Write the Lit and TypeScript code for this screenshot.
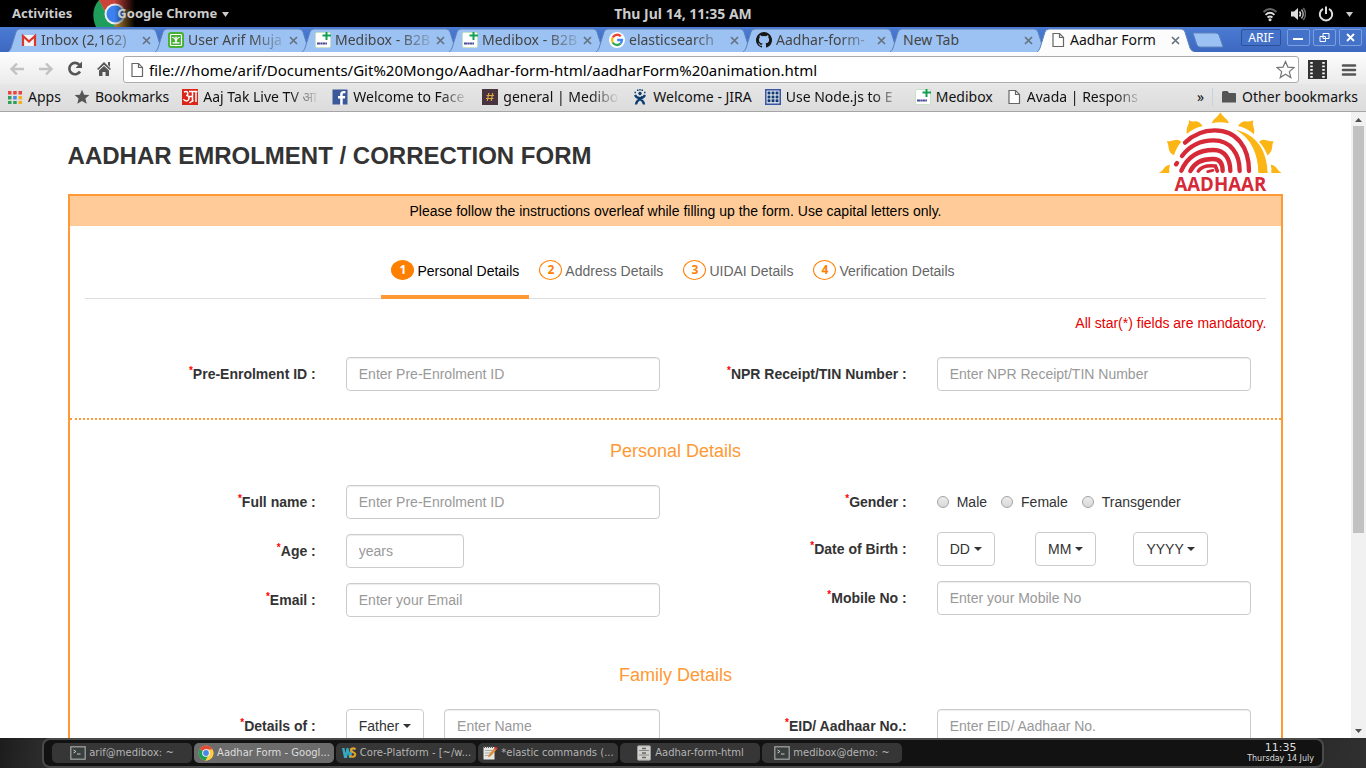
import { LitElement, html, svg, css, nothing, TemplateResult } from "lit";
import { customElement, property } from "lit/decorators.js";
import { classMap } from "lit/directives/class-map.js";

const page = svg`<path d="M3 1.5h6.5l4 4v9H3z" fill="#fff" stroke="#666" stroke-width="1.2"/><path d="M9.500 1.500v4h4" fill="none" stroke="#666" stroke-width="1.200"/>`;
const medibox = svg`<rect x=".5" y=".5" width="15" height="15" rx="1.500" fill="#fff" stroke="#c9e2c6"/><path d="M11.500 0v8M7.500 3.500H16" stroke="#12a150" stroke-width="2"/><path d="M2 11.500h10" stroke="#4b4b9b" stroke-width="2" stroke-dasharray="3 .3 2 .3"/>`;
const terminal = svg`<rect x=".8" y="1.800" width="14.400" height="12.400" fill="#39403f" stroke="#a6a6a6" stroke-width="1.200"/><path d="M3.500 5l2.500 1.500-2.500 1.500M7 9h3.500" stroke="#c8c8c8" fill="none"/>`;
const chrome = svg`<circle cx="8" cy="8" r="7.500" fill="#fc4"/><path d="M8 8L1.500 4.200A7.500 7.500 0 0 1 14.500 4.500z" fill="#e14b3d"/><path d="M8 8L1.500 4.200A7.500 7.500 0 0 0 7.500 15.500L11 9.500z" fill="#1d9f5b"/><path d="M8 4.500h6.500A7.500 7.500 0 0 1 7.500 15.500L11 9.500z" fill="#fc4"/><circle cx="8" cy="8" r="3.800" fill="#fff"/><circle cx="8" cy="8" r="2.900" fill="#4a86e8"/>`;

const ICONS: Record<string, TemplateResult> = {
  page,
  medibox,
  terminal,
  chrome,
  gmail: svg`<path d="M1 3h14v11H1z" fill="#f4f4f4"/><path d="M2 14V4l6 5.500L14 4v10" fill="none" stroke="#d8392c" stroke-width="2.200"/>`,
  user: svg`<rect width="16" height="16" rx="3" fill="#46b035"/><rect x="2.500" y="2.500" width="11" height="11" rx="1" fill="none" stroke="#fff" stroke-width="1.200"/><path d="M4.300 5.500c2 0 3.400 1.500 3.700 5 .3-3.500 1.700-5 3.700-5M8 4.500v5M4.500 10.800h7" fill="none" stroke="#fff" stroke-width="1.200"/>`,
  google: svg`<circle cx="8" cy="8" r="8" fill="#fff"/><g fill="none" stroke-width="2.300"><path d="M11.800 4.300A5 5 0 0 0 3.700 5.500" stroke="#ea4335"/><path d="M3.700 5.500a5 5 0 0 0 0 5" stroke="#fbbc05"/><path d="M3.700 10.500A5 5 0 0 0 11.400 11.700" stroke="#34a853"/><path d="M11.400 11.700A5 5 0 0 0 13 8H8.200" stroke="#4285f4"/></g>`,
  github: svg`<path fill="#191717" d="M8 0a8 8 0 0 0-2.530 15.590c.4.070.55-.17.550-.38v-1.490c-2.230.48-2.700-.94-2.700-.94-.36-.93-.89-1.170-.89-1.170-.73-.5.050-.49.050-.49.810.060 1.230.83 1.230.83.72 1.230 1.880.87 2.340.67.070-.52.280-.87.510-1.070-1.780-.2-3.640-.89-3.640-3.950 0-.87.310-1.590.82-2.150-.08-.2-.36-1.020.080-2.120 0 0 .67-.21 2.200.82a7.600 7.600 0 0 1 4 0c1.530-1.040 2.200-.82 2.200-.82.440 1.100.160 1.920.080 2.120.51.560.82 1.270.82 2.150 0 3.070-1.870 3.750-3.650 3.950.29.250.54.730.54 1.480v2.190c0 .21.150.46.550.38A8 8 0 0 0 8 0z"/>`,
  apps: svg`<g><path d="M1 2h3.500v3.500H1zM6.200 2h3.500v3.500H6.200zM11.500 2H15v3.500h-3.500z" fill="#e8453c"/><path d="M1 7h3.500v3.500H1z" fill="#2e9e5b"/><path d="M6.200 7h3.500v3.500H6.200z" fill="#4a86e8"/><path d="M11.500 7H15v3.500h-3.500z" fill="#f2b01e"/><path d="M1 12h3.500v3H1zM6.200 12h3.500v3H6.200z" fill="#2e9e5b"/><path d="M11.500 12H15v3h-3.500z" fill="#f2b01e"/></g>`,
  star: svg`<path d="M8 .8l2.100 4.900 5.300.4-4 3.500 1.300 5.200L8 12l-4.700 2.800 1.300-5.200-4-3.500 5.300-.4z" fill="#555"/>`,
  aajtak: svg`<rect width="16" height="16" fill="#dc2418"/><path d="M2 3c3-1.500 5 .5 3 3.500 3 .5 2.500 5-.5 5.500-1.500 0-2.500-.8-3-2M6 7.500h4M7 2.500h8.500M10.500 2.500V13M14 2.500V13M7.500 14l4-3" fill="none" stroke="#fff" stroke-width="1.500"/>`,
  facebook: svg`<rect x=".5" y=".5" width="15" height="15" fill="#3b5998"/><path d="M10.700 16V9.500h2.200l.4-2.500h-2.600V5.500c0-.8.3-1.200 1.300-1.200h1.400V2.100c-3-.5-5.200.2-5.200 3.100V7H6v2.500h2.200V16z" fill="#fff"/>`,
  slack: svg`<rect width="16" height="16" fill="#49333f"/><path d="M6.800 4L5.300 12M10.700 4L9.200 12M4.500 6.500h7.500M4 9.500h7.500" stroke="#d9a441" stroke-width="1.200"/>`,
  jira: svg`<g fill="none" stroke="#0b3d6f"><circle cx="8" cy="4.500" r="1.300" fill="#0b3d6f"/><path d="M3 6c1 2.500 3 3 5 3s4-.5 5-3" stroke-width="2.200"/><path d="M4 15.500c0-3 1.500-4 4-5.500s2-2 2.500-2.500M12 15.500c0-3-1.500-4-4-5.500" stroke-width="2.200"/><path d="M2.500 3.500h1.500M5 1.200h1.500M9.500 1.200H11M12 3.500h1.500M7.300.6h1.400" stroke-width="1.600"/></g>`,
  node: svg`<rect x=".8" y=".8" width="14.400" height="14.400" fill="#fff" stroke="#3b55a4" stroke-width="1.600"/><path d="M4 2.500v10.800M8 2.500v10.800M12 2.500v10.800" stroke="#123c70" stroke-width="3" stroke-dasharray="3 .9"/>`,
  folder: svg`<path d="M1 3.500q0-1.500 1.500-1.500h4L8 4h6q1 0 1 1v8.500H1z" fill="#555"/>`,
  webstorm: svg`<path d="M1 3l2 10h3l1-5 1 5h2l2-10H9.500L8.500 8 7.500 3H5.500L4.500 8 3.500 3z" fill="#35a9c4"/><path d="M14.500 4.500c-2-2-5-1-4.500 1 .4 2 4.500 1.500 4.300 4-.2 2.500-3.500 3-5.500 1" fill="none" stroke="#e0a12a" stroke-width="2.200"/>`,
  notes: svg`<path d="M1.500 2h11v12.500h-11z" fill="#e8e8e2"/><path d="M3 5.500h8M3 8h7M3 10.500h5" stroke="#999" stroke-width=".8"/><path d="M2 2h10" stroke="#555" stroke-width="1.800" stroke-dasharray="1 1"/><path d="M6 12.500l1-3 6-7 2 1.500-6 7z" fill="#dd8c3c"/><path d="M12.200 3.400l1.500-1.700 2 1.500-1.400 1.800z" fill="#d33"/>`,
  files: svg`<rect x="1.500" y=".8" width="13" height="14.400" rx="1" fill="#d2d2cc" stroke="#999"/><path d="M3 5.500h10M3 10h10" stroke="#888"/><path d="M6 3.500h4M6 8h4M6 12.500h4" stroke="#666" stroke-width="1.400"/>`,
};

const icon = (name: string) =>
  html`<svg class="icon" viewBox="0 0 16 16" aria-hidden="true">${ICONS[name]}</svg>`;

const TABS = [
  { icon: "gmail", title: "Inbox (2,162)" },
  { icon: "user", title: "User Arif Muja" },
  { icon: "medibox", title: "Medibox - B2B" },
  { icon: "medibox", title: "Medibox - B2B" },
  { icon: "google", title: "elasticsearch" },
  { icon: "github", title: "Aadhar-form-" },
  { icon: "", title: "New Tab" },
  { icon: "page", title: "Aadhar Form", active: true },
];

const BOOKMARKS = [
  { icon: "apps", title: "Apps" },
  { icon: "star", title: "Bookmarks" },
  { icon: "aajtak", title: "Aaj Tak Live TV आ", long: true },
  { icon: "facebook", title: "Welcome to Face", long: true },
  { icon: "slack", title: "general | Medibo", long: true },
  { icon: "jira", title: "Welcome - JIRA" },
  { icon: "node", title: "Use Node.js to E", long: true },
  { icon: "medibox", title: "Medibox" },
  { icon: "page", title: "Avada | Respons", long: true },
];

const WINDOWS = [
  { icon: "terminal", title: "arif@medibox: ~" },
  { icon: "chrome", title: "Aadhar Form - Googl...", active: true },
  { icon: "webstorm", title: "Core-Platform - [~/w..." },
  { icon: "notes", title: "*elastic commands (..." },
  { icon: "files", title: "Aadhar-form-html" },
  { icon: "terminal", title: "medibox@demo: ~" },
];

const iconStyles = css`
  * { box-sizing: border-box; }
  .icon { width: 16px; height: 16px; flex: none; display: block; }
  button { font: inherit; color: inherit; border: 0; padding: 0; background: none; }
`;

@customElement("shell-bar")
class ShellBar extends LitElement {
  static styles = [iconStyles, css`
    :host { display: grid; grid-template-columns: 1fr auto 1fr; align-items: center; height: 27px; background: #000; color: #ccc; font: bold 13px/27px "Noto Sans", "Open Sans", sans-serif; }
    .left { display: flex; height: 27px; padding-left: 12px; gap: 21px; }
    .app { display: grid; }
    .app button { grid-area: 1 / 1; margin-left: 24px; display: flex; align-items: center; gap: 5px; }
    .logo { grid-area: 1 / 1; width: 42px; height: 27px; }
    .clock { font-size: 14px; }
    .right { display: flex; justify-content: flex-end; align-items: center; gap: 12px; padding-right: 13px; }
    .down { width: 7px; height: 6px; }
  `];

  render() {
    const down = html`<svg class="down" viewBox="0 0 7 6"><path d="M0 1h7L3.500 6z" fill="#ccc"/></svg>`;
    return html`
      <div class="left">
        <button>Activities</button>
        <div class="app">
          <svg class="logo" viewBox="0 0 42 27">
            <defs>
              <linearGradient id="fade"><stop offset=".5" stop-color="#000" stop-opacity="0"/><stop offset="1" stop-color="#000"/></linearGradient>
            </defs>
            <path d="M6 0h36v27H6z" fill="#b8862b"/>
            <path d="M6 0h36v9H22L14 14z" fill="#c9433a"/>
            <path d="M6 0C-1 8-1 18 3 27h18l3-6-11-7z" fill="#1f9d5b"/>
            <circle cx="22" cy="14" r="10.500" fill="#eee"/><circle cx="22" cy="14" r="8.500" fill="#3b82f0"/>
            <path d="M0 0h42v27H0z" fill="url(#fade)"/>
          </svg>
          <button>Google Chrome ${down}</button>
        </div>
      </div>
      <time class="clock">Thu Jul 14, 11:35 AM</time>
      <div class="right">
        <svg class="icon" viewBox="0 0 16 16"><g fill="none" stroke-width="1.800"><path d="M1.500 6Q8 0 14.500 6" stroke="#666"/><path d="M3.500 8.800q4.500-4 9 0M5.500 11.500q2.500-2 5 0" stroke="#ddd"/></g><circle cx="8" cy="13.800" r="1.500" fill="#ddd"/></svg>
        <svg class="icon" viewBox="0 0 16 16"><path d="M1 5.500h3L8 2v12L4 10.500H1z" fill="#ddd"/><g fill="none" stroke-width="1.500"><path d="M9.500 5.500q2 2.500 0 5" stroke="#ddd"/><path d="M11.500 3.500q3.500 4.500 0 9" stroke="#aaa"/><path d="M13.300 2q4.500 6 0 12" stroke="#666"/></g></svg>
        <svg class="icon" viewBox="0 0 16 16"><path d="M5 2.800a6.200 6.200 0 1 0 6 0M8 .5v7.500" fill="none" stroke="#ddd" stroke-width="2"/></svg>
        ${down}
      </div>`;
  }
}

@customElement("browser-frame")
class BrowserFrame extends LitElement {
  static styles = [iconStyles, css`
    :host { display: block; font: 14px/18px "Noto Sans", "Open Sans", sans-serif; color: #111; }
    .strip { display: flex; height: 25px; padding-left: 8px; background: linear-gradient(#4b7bd3, #3d68c0); }
    .tabs { display: flex; flex: 0 1 1176px; min-width: 0; }
    .tab { flex: 1 1 0; min-width: 0; display: grid; color: #444; }
    .shape { grid-area: 1 / 1; width: calc(100% + 11px); height: 25px; }
    .body { grid-area: 1 / 1; z-index: 1; display: flex; align-items: center; gap: 4px; padding: 1px 4px 0 13px; min-width: 0; }
    .active { color: #111; z-index: 2; }
    .title { flex: 1; min-width: 0; white-space: nowrap; }
    .faded { mask-image: linear-gradient(to right, #000 65%, transparent 105%); }
    .close { width: 9px; height: 9px; display: block; }
    .close svg { display: block; width: 9px; height: 9px; }
    .new { width: 32px; height: 16px; margin: 5px 0 0 8px; }
    .new svg { display: block; }
    .controls { display: flex; gap: 3px; margin-left: auto; padding: 2px 4px 0 0; }
    .controls button { width: 23px; height: 17px; border: 1px solid #7c9fe0; border-radius: 2px; display: grid; place-items: center; background: #4472c8; }
    .controls .profile { width: 40px; margin-right: 3px; border-color: #2c509a; color: #fff; font: 12px/15px "Noto Sans", sans-serif; }
    .toolbar { display: flex; align-items: center; height: 32px; padding: 0 9px; background: linear-gradient(#fdfdfd, #ebebeb); }
    .nav { display: flex; gap: 13px; margin-right: 11px; }
    .address { flex: 1; display: flex; align-items: center; gap: 4px; height: 27px; border: 1px solid #aaa; border-radius: 3px; background: #fff; padding: 0 3px 0 5px; margin-top: 3px; }
    .address input { flex: 1; min-width: 0; border: 0; outline: 0; padding: 0; background: none; color: #000; font: 15px/20px "Noto Sans", "Open Sans", sans-serif; }
    .big { width: 19px; height: 19px; display: block; }
    .tools { display: flex; gap: 14px; margin: 0 0 0 9px; padding-top: 3px; }
    .bookmarks { display: flex; align-items: center; height: 28px; padding: 0 8px 2px 7px; background: linear-gradient(#e6e6e6, #dcdcdc); border-bottom: 1px solid #a5a5a5; }
    .links { display: flex; gap: 13px; min-width: 0; }
    .link { display: flex; align-items: center; gap: 5px; color: #111; text-decoration: none; white-space: nowrap; }
    .long { width: 116px; mask-image: linear-gradient(to right, #000 75%, transparent); }
    .other { margin-left: 8px; border-left: 1px solid #c8d2dc; padding-left: 8px; }
    .more { margin-left: auto; }
  `];

  render() {
    return html`
      <div class="strip">
        <div class="tabs" role="tablist">
          ${TABS.map((t) => html`
            <div class=${classMap({ tab: true, active: !!t.active })} role="tab">
              <svg class="shape" viewBox="0 0 158 25" preserveAspectRatio="none">
                <path d="M0 25Q2 24 3 21L8 5Q9 2 12 2H144Q147 2 148 5L153 21Q154 24 158 25" fill=${t.active ? "#fcfcfc" : "#9cc2f3"} stroke="#5d83bd"/>
              </svg>
              <div class="body">
                ${t.icon ? icon(t.icon) : nothing}
                <span class=${classMap({ title: true, faded: !t.active && !!t.icon })}>${t.title}</span>
                <button class="close" aria-label="Close ${t.title}"><svg viewBox="0 0 9 9"><path d="M1 1l7 7M8 1L1 8" stroke="#66727f" stroke-width="1.700"/></svg></button>
              </div>
            </div>`)}
        </div>
        <button class="new" aria-label="New tab"><svg width="32" height="16" viewBox="0 0 32 16"><path d="M1 1h22q3 0 4 2l4 12H8q-2 0-3-2z" fill="#9cc2f3" stroke="#5d83bd"/></svg></button>
        <div class="controls">
          <button class="profile">ARIF</button>
          <button aria-label="Minimise"><svg width="13" height="11"><path d="M1 7h10" stroke="#fff" stroke-width="2"/></svg></button>
          <button aria-label="Restore"><svg width="13" height="11"><path d="M5 1.500h6v5H5zM2 4.500h5.500v5H2z" fill="none" stroke="#fff"/></svg></button>
          <button aria-label="Close window"><svg width="11" height="11"><path d="M2 2l7 7M9 2L2 9" stroke="#fff" stroke-width="1.800"/></svg></button>
        </div>
      </div>
      <div class="toolbar">
        <div class="nav">
          <button aria-label="Back"><svg class="icon" viewBox="0 0 16 16"><path d="M15 9H3M8 3.500L2.500 9 8 14.500" fill="none" stroke="#c2c2c2" stroke-width="2.400"/></svg></button>
          <button aria-label="Forward"><svg class="icon" viewBox="0 0 16 16"><path d="M1 9h12M8 3.500L13.500 9 8 14.500" fill="none" stroke="#c2c2c2" stroke-width="2.400"/></svg></button>
          <button aria-label="Reload"><svg class="icon" viewBox="0 0 16 16"><path d="M13 11.500A5.700 5.700 0 1 1 12.500 5" fill="none" stroke="#555" stroke-width="2.600"/><path d="M15 1.500V8H8.500z" fill="#555"/></svg></button>
          <button aria-label="Home"><svg class="icon" viewBox="0 0 16 16"><path d="M8 2L15 9l-1.200 1L8 4.800 2.200 10 1 9z" fill="#555"/><path d="M8 6l5 4.500V16H9.500v-4h-3v4H3v-5.500zM12 2h2v5l-2-2z" fill="#555"/></svg></button>
        </div>
        <div class="address">
          ${icon("page")}
          <input aria-label="Address" value="file:///home/arif/Documents/Git%20Mongo/Aadhar-form-html/aadharForm%20animation.html">
          <button aria-label="Bookmark this page"><svg class="big" viewBox="0 0 19 19"><path d="M9.500 1.500l2.400 5.600 6 .5-4.600 4 1.500 6-5.300-3.300-5.300 3.300 1.500-6-4.600-4 6-.5z" fill="#fff" stroke="#777" stroke-width="1.200"/></svg></button>
        </div>
        <div class="tools">
          <button aria-label="Video downloader"><svg class="big" viewBox="0 0 19 19"><path d="M0 0h19v19H0z" fill="#333"/><path d="M3.500 2v16M15.500 2v16" stroke="#fff" stroke-width="2.500" stroke-dasharray="1.800 1.700"/></svg></button>
          <button aria-label="Menu"><svg class="icon" viewBox="0 0 16 16"><path d="M2 3.500h12M2 8h12M2 12.500h12" stroke="#555" stroke-width="2.600" stroke-linecap="round"/></svg></button>
        </div>
      </div>
      <div class="bookmarks">
        <nav class="links">
          ${BOOKMARKS.map((b) => html`<a class="link" href="#">${icon(b.icon)}<span class=${classMap({ long: !!b.long })}>${b.title}</span></a>`)}
        </nav>
        <button class="more" aria-label="More bookmarks">»</button>
        <a class="link other" href="#">${icon("folder")}<span>Other bookmarks</span></a>
      </div>`;
  }
}

@customElement("form-field")
class FormField extends LitElement {
  @property() label = "";
  @property() hint = "";
  @property() kind = "text";

  static styles = css`
    * { box-sizing: border-box; }
    :host { display: grid; grid-template-columns: 5fr 7fr; font: 14px/20px "Liberation Sans", Arial, sans-serif; color: #333; }
    .name { text-align: right; padding: 7px 15px 5px 0; font-weight: bold; }
    .star { color: #f00; font-size: 10px; line-height: 1; vertical-align: 5px; }
    .control { padding: 0 15px; min-width: 0; }
    input, select { font: inherit; color: #333; border: 1px solid #ccc; border-radius: 4px; background: #fff; height: 34px; margin: 0; min-width: 0; }
    .text { display: block; width: 100%; padding: 6px 12px; box-shadow: inset 0 1px 1px rgba(0, 0, 0, 0.075); }
    .text::placeholder { color: #999; opacity: 1; }
    .parts { display: grid; grid-template-columns: 5fr 5fr 6fr; }
    .age { display: grid; grid-template-columns: 6fr 10fr; }
    .relative { display: grid; grid-template-columns: 5fr 11fr; }
    .drop { display: inline-grid; justify-self: start; }
    .drop select { grid-area: 1 / 1; appearance: none; padding: 6px 23px 6px 12px; }
    .drop::after { content: ""; grid-area: 1 / 1; place-self: center end; margin-right: 13px; border: 4px solid transparent; border-top-color: #333; border-bottom: 0; pointer-events: none; }
    .radios { display: flex; gap: 14px; height: 32px; padding-top: 7px; }
    .radios label { display: flex; gap: 8px; height: 20px; align-items: center; }
    .radios input { appearance: none; width: 12px; height: 12px; border: 1px solid #a3a3a3; border-radius: 50%; background: linear-gradient(#ececec, #d8d8d8); }
  `;

  private drop(text: string, name: string, id = "") {
    return html`<span class="drop"><select id=${id || nothing} aria-label=${name}><option>${text}</option></select></span>`;
  }

  private control() {
    const box = (id: string, name = this.label) => html`<input class="text" id=${id} aria-label=${name} placeholder=${this.hint}>`;
    switch (this.kind) {
      case "age":
        return html`<div class="age">${box("main")}</div>`;
      case "gender":
        return html`<div class="radios" role="radiogroup" aria-labelledby="name">
          ${["Male", "Female", "Transgender"].map((g) => html`<label><input type="radio" name="gender">${g}</label>`)}
        </div>`;
      case "date":
        return html`<div class="parts">${this.drop("DD", "Day", "main")}${this.drop("MM", "Month")}${this.drop("YYYY", "Year")}</div>`;
      case "relative":
        return html`<div class="relative">${this.drop("Father", "Relation", "main")}${box("person", "Name")}</div>`;
      default:
        return box("main");
    }
  }

  render() {
    return html`
      <label class="name" id="name" for="main"><span class="star">*</span>${this.label}</label>
      <div class="control">${this.control()}</div>`;
  }
}

@customElement("aadhar-form")
class AadharForm extends LitElement {
  static styles = css`
    * { box-sizing: border-box; }
    :host { display: block; width: 90%; margin: 0 auto; font: 14px/20px "Liberation Sans", Arial, sans-serif; color: #333; }
    .head { display: flex; justify-content: space-between; height: 82px; }
    h1 { margin: 30px 0 0; font-size: 24px; line-height: 28px; }
    .logo { width: 125px; height: 80px; display: block; }
    .word { font: bold 56px "Open Sans", "Noto Sans", sans-serif; fill: #d62a38; text-anchor: middle; }
    .panel { border: 2px solid #ff9933; }
    .banner { background: #ffcc99; color: #000; text-align: center; padding: 5px; }
    .steps { display: flex; justify-content: center; margin: 24px 15px 0; padding: 0 5px 0 0; border-bottom: 1px solid #ddd; }
    .step { display: flex; gap: 3px; padding: 10px 10px 14px; height: 49px; margin-bottom: -1px; border-bottom: 4px solid transparent; color: #666; text-decoration: none; }
    .current { color: #000; border-color: #ff9933; }
    .badge { width: 23px; height: 20px; border: 1px solid #ff8000; border-radius: 50%; color: #ff8000; font: bold 12px/18px "Open Sans", sans-serif; text-align: center; }
    .current .badge { background: #ff8000; color: #fff; }
    .step span:last-child { padding-top: 1px; }
    .note { margin: 14px 15px 24px; color: #e60000; text-align: right; }
    .pair { display: grid; grid-template-columns: 1fr 1fr; padding: 0 15px; }
    .column { display: flex; flex-direction: column; gap: 15px; }
    .intro { padding-bottom: 27px; border-bottom: 2px dotted #ff9933; }
    h2 { margin: 0; color: #ff9933; font-size: 18px; line-height: 20px; font-weight: normal; text-align: center; padding: 21px 0 24px; }
    .next { padding-top: 48px; }
  `;

  render() {
    return html`
      <header class="head">
        <h1>AADHAR EMROLMENT / CORRECTION FORM</h1>
        <svg class="logo" viewBox="125 336 375 240" role="img" aria-label="Aadhaar">
          <g fill="#fbb615">
            <path d="M286 370Q287 361 298 354Q307 347 312 337Q317 347 326 354Q337 361 338 370Q312 364 286 370z"/>
            <path d="M211 402Q210 385 214 378Q219 370 218 361Q227 366 237 364Q250 364 259 378Q232 384 211 402z"/>
            <path d="M365 378Q374 364 387 364Q399 366 411 361Q407 370 411 379Q415 387 413 403Q392 384 365 378z"/>
            <path d="M173 466Q158 459 157 445Q157 432 151 423Q161 425 172 421Q185 416 195 425Q179 444 173 466z"/>
            <path d="M428 425Q438 416 450 421Q462 425 472 423Q467 432 467 445Q465 459 453 466Q446 444 428 425z"/>
            <path d="M127 519Q138 514 142 506Q150 494 161 495Q157 507 159 519z"/>
            <path d="M463 494Q474 494 481 505Q486 513 496 519H465Q467 507 463 494z"/>
            <path d="M358 389C420 403 452 450 454 519H426C426 462 404 414 358 389z"/>
          </g>
          <g fill="none" stroke="#d62a38" stroke-width="13" stroke-linecap="round">
            <path d="M206 428Q244 391 295 391C362 391 398 442 398 513"/>
            <path d="M197 468Q232 421 292 421C342 421 370 460 370 513"/>
            <path d="M179 493L182 489"/>
            <path d="M195 512Q222 450 292 450C326 450 342 478 342 513"/>
            <path d="M222 513Q240 476 291 477C314 477 319 494 319 513"/>
            <path d="M246 513Q260 494 297 498L303 513" stroke-width="11"/>
            <path d="M274 515L290 511" stroke-width="8"/>
          </g>
          <text class="word" x="312" y="573">AADHAAR</text>
        </svg>
      </header>
      <form class="panel">
        <div class="banner">Please follow the instructions overleaf while filling up the form. Use capital letters only.</div>
        <nav class="steps">
          ${["Personal Details", "Address Details", "UIDAI Details", "Verification Details"].map(
            (s, i) => html`<a class=${classMap({ step: true, current: i === 0 })} href="#"><span class="badge">${i + 1}</span><span>${s}</span></a>`
          )}
        </nav>
        <p class="note">All star(*) fields are mandatory.</p>
        <div class="pair intro">
          <form-field label="Pre-Enrolment ID :" hint="Enter Pre-Enrolment ID"></form-field>
          <form-field label="NPR Receipt/TIN Number :" hint="Enter NPR Receipt/TIN Number"></form-field>
        </div>
        <h2>Personal Details</h2>
        <div class="pair">
          <div class="column">
            <form-field label="Full name :" hint="Enter Pre-Enrolment ID"></form-field>
            <form-field label="Age :" hint="years" kind="age"></form-field>
            <form-field label="Email :" hint="Enter your Email"></form-field>
          </div>
          <div class="column">
            <form-field label="Gender :" kind="gender"></form-field>
            <form-field label="Date of Birth :" kind="date"></form-field>
            <form-field label="Mobile No :" hint="Enter your Mobile No"></form-field>
          </div>
        </div>
        <h2 class="next">Family Details</h2>
        <div class="pair">
          <form-field label="Details of :" hint="Enter Name" kind="relative"></form-field>
          <form-field label="EID/ Aadhaar No.:" hint="Enter EID/ Aadhaar No."></form-field>
        </div>
      </form>`;
  }
}

@customElement("task-dock")
class TaskDock extends LitElement {
  static styles = [iconStyles, css`
    :host { display: block; height: 30px; padding: 0 42px; background: linear-gradient(100deg, #1c1c1c, #2b2b2b 3%, #191919 30%, #282828 60%, #1d1d1d 85%, #303030); font: 10px/12px "DejaVu Sans", sans-serif; color: #b4b4b4; }
    .dock { display: flex; align-items: center; gap: 2px; height: 30px; padding: 0 8px; border: 2px solid #4a4a4a; border-radius: 8px; background: #121212; }
    .item { flex: 0 1 140px; min-width: 0; height: 20px; display: flex; align-items: center; justify-content: center; gap: 3px; border-radius: 5px; background: #363636; white-space: nowrap; }
    .active { background: #6b6b6b; color: #ddd; }
    .clock { margin-left: auto; text-align: center; color: #ddd; }
    .time { font-size: 11px; line-height: 12px; }
    .date { font-size: 8px; line-height: 10px; }
  `];

  render() {
    return html`
      <div class="dock">
        ${WINDOWS.map((w) => html`<button class=${classMap({ item: true, active: !!w.active })}>${icon(w.icon)}<span>${w.title}</span></button>`)}
        <div class="clock"><div class="time">11:35</div><div class="date">Thursday 14 July</div></div>
      </div>`;
  }
}

@customElement("app-root")
class AppRoot extends LitElement {
  static styles = css`
    :host { display: flex; flex-direction: column; height: 100vh; background: #fff; overflow: hidden; }
    .view { flex: 1; min-height: 0; display: flex; overflow: hidden; }
    .content { flex: 1; min-width: 0; overflow: hidden; }
    .scroll { flex: none; width: 15px; display: flex; flex-direction: column; align-items: center; background: #f1f1f1; }
    .arrow { width: 15px; height: 14px; display: block; }
    .track { flex: 1; width: 11px; }
    .thumb { height: 68%; background: #c1c1c1; }
  `;

  render() {
    return html`
      <shell-bar></shell-bar>
      <browser-frame></browser-frame>
      <div class="view">
        <main class="content"><aadhar-form></aadhar-form></main>
        <div class="scroll" aria-hidden="true">
          <svg class="arrow" viewBox="0 0 15 14"><path d="M4 10h7L7.500 6z" fill="#505050"/></svg>
          <div class="track"><div class="thumb"></div></div>
          <svg class="arrow" viewBox="0 0 15 14"><path d="M4 5h7L7.500 9z" fill="#505050"/></svg>
        </div>
      </div>
      <task-dock></task-dock>`;
  }
}
